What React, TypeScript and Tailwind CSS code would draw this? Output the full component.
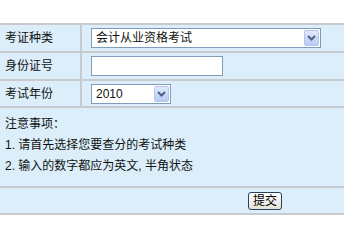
import React from "react"

const CELL = "bg-[#dbeefa]"

function Chevron() {
  return (
    <svg width="9" height="6" viewBox="0 0 9 6">
      <path d="M1 1 L4.5 4.5 L8 1" fill="none" stroke="#4d6185" strokeWidth="2" />
    </svg>
  )
}

function FakeSelect({ value, width }: { value: string; width: string }) {
  return (
    <div className={`${width} h-[20px] border border-[#7f9db9] bg-white flex items-center justify-between pl-[4px] pr-[1px]`}>
      <span className="leading-none">{value}</span>
      <div className="w-[15px] h-[16px] rounded-[2px] border border-[#b4c6f0] bg-gradient-to-b from-[#e0e9fd] to-[#b9cbf5] flex items-center justify-center">
        <Chevron />
      </div>
    </div>
  )
}

function FormRow({ label, height, children }: { label: string; height: string; children: React.ReactNode }) {
  return (
    <div className={`flex gap-[2px] ${height}`}>
      <div className={`${CELL} w-[80px] flex items-center pl-[5px]`}>{label}</div>
      <div className={`${CELL} flex-1 flex items-center pl-[9px]`}>{children}</div>
    </div>
  )
}

export default function App() {
  return (
    <div className="w-[344px] h-[233px] bg-white pt-[23px] text-[12px] text-[#111] font-['Liberation_Sans','Noto_Sans_CJK_SC',sans-serif]">
      <div className="flex flex-col gap-[2px] bg-[#c8cbce] py-[2px]">
        <FormRow label="考证种类" height="h-[26px]">
          <FakeSelect value="会计从业资格考试" width="w-[230px]" />
        </FormRow>
        <FormRow label="身份证号" height="h-[26px]">
          <div className="w-[132px] h-[20px] border border-[#7f9db9] bg-white" />
        </FormRow>
        <FormRow label="考试年份" height="h-[25px]">
          <FakeSelect value="2010" width="w-[80px]" />
        </FormRow>

        {/* 注意事项 */}
        <div className={`${CELL} h-[78px] pl-[5px] pt-[6px] leading-[21px]`}>
          <div>注意事项：</div>
          <div>1. 请首先选择您要查分的考试种类</div>
          <div>2. 输入的数字都应为英文, 半角状态</div>
        </div>

        <div className={`${CELL} h-[25px] flex items-center pl-[248px]`}>
          <button className="w-[34px] h-[18px] rounded-[3px] border border-[#2b3f57] bg-gradient-to-b from-white to-[#e4e2d6] text-[12px] leading-none text-black flex items-center justify-center">
            提交
          </button>
        </div>
      </div>
    </div>
  )
}
